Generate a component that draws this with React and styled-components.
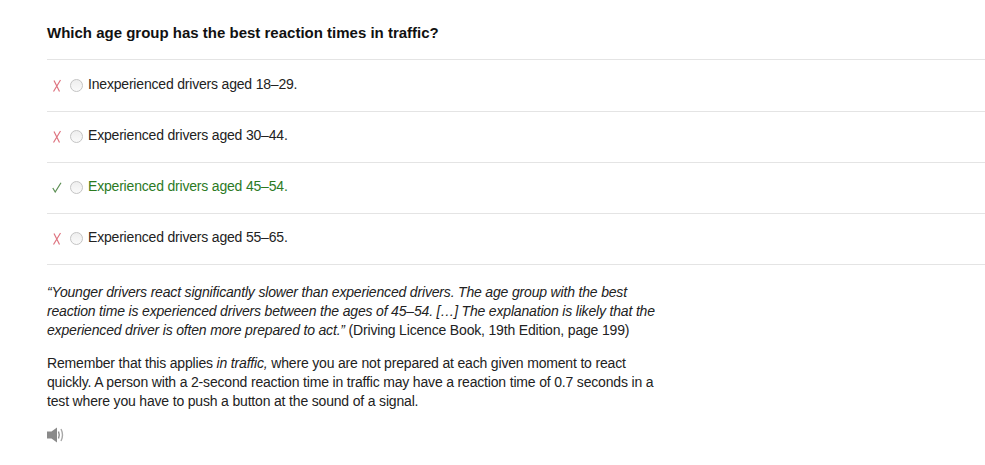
import React from 'react';
import styled, { createGlobalStyle } from 'styled-components';

const Global = createGlobalStyle`
  html, body { margin: 0; padding: 0; background: #fff; }
  body { font-family: "Liberation Sans", Arial, sans-serif; color: #222; overflow: hidden; }
`;
const Page = styled.main`
  width: 985px; height: 465px; box-sizing: border-box; padding-top: 24px; overflow: hidden;
`;
const Question = styled.h1`
  margin: 0 0 17px 47px; font-size: 15px; line-height: 18px; font-weight: 700; color: #111;
`;
const List = styled.ul`
  list-style: none; margin: 0 0 0 47px; padding: 0; border-top: 1px solid #e4e4e4;
`;
const Row = styled.li`
  box-sizing: border-box; height: 51px; padding-bottom: 4px; border-bottom: 1px solid #e4e4e4;
  display: flex; align-items: center;
  font-size: 14px; letter-spacing: -0.19px; color: ${p => (p.$correct ? '#2c7a1f' : '#222')};
  &:first-child { height: 52px; padding-top: 1px; }
`;
const Mark = styled.span`
  width: 23px; display: flex; align-items: center; padding-left: 5px; box-sizing: border-box; margin-top: 3px;
`;
const Radio = styled.span`
  width: 11px; height: 11px; border: 1px solid #c4c4c4; border-radius: 50%; margin-right: 5px; margin-top: 2px;
  background: linear-gradient(#eee, #fafafa);
`;
const Explanation = styled.section`
  width: 612px; margin: 18px 0 0 47px; font-size: 14px; line-height: 19px; letter-spacing: -0.175px; color: #222;
`;
const Para = styled.p`
  margin: 0 0 14px;
`;
const Sound = styled.svg`
  display: block; margin-top: 16px;
`;

const Cross = () => (
  <svg width="10" height="13" viewBox="0 0 10 13" fill="none" stroke="#de7480" strokeWidth="1.2">
    <path d="M2 1.5 L7.5 12.5 M8.5 1 L1.5 12.5" />
  </svg>
);
const Check = () => (
  <svg width="10" height="11" viewBox="0 0 10 11" fill="none" stroke="#5c8f54" strokeWidth="1.2">
    <path d="M0.8 6 L3.2 10 L9 0.8" />
  </svg>
);

const answers = [
  ['Inexperienced drivers aged 18–29.', false],
  ['Experienced drivers aged 30–44.', false],
  ['Experienced drivers aged 45–54.', true],
  ['Experienced drivers aged 55–65.', false],
];

export default function App() {
  return (
    <Page>
      <Global />
      <Question>Which age group has the best reaction times in traffic?</Question>
      <List>
        {answers.map(([t, ok]) => (
          <Row key={t} $correct={ok}>
            <Mark>{ok ? <Check /> : <Cross />}</Mark>
            <Radio />
            {t}
          </Row>
        ))}
      </List>
      <Explanation>
        <Para>
          <em>“Younger drivers react significantly slower than experienced drivers. The age group with the best reaction time is experienced drivers between the ages of 45–54. […] The explanation is likely that the experienced driver is often more prepared to act.”</em> (Driving Licence Book, 19th Edition, page 199)
        </Para>
        <Para>
          Remember that this applies <em>in traffic,</em> where you are not prepared at each given moment to react quickly. A person with a 2-second reaction time in traffic may have a reaction time of 0.7 seconds in a test where you have to push a button at the sound of a signal.
        </Para>
        <Sound width="18" height="16" viewBox="0 0 18 16" fill="none">
          <path d="M0 4.5 H4.5 L10 0.5 V15.5 L4.5 11.5 H0 Z" fill="#8a8a8a" />
          <path d="M11.5 4.5 Q13 8 11.5 11.5" stroke="#8f8f8f" strokeWidth="1.4" />
          <path d="M14 2 Q17 8 14 14" stroke="#a8a8a8" strokeWidth="1.4" />
        </Sound>
      </Explanation>
    </Page>
  );
}
